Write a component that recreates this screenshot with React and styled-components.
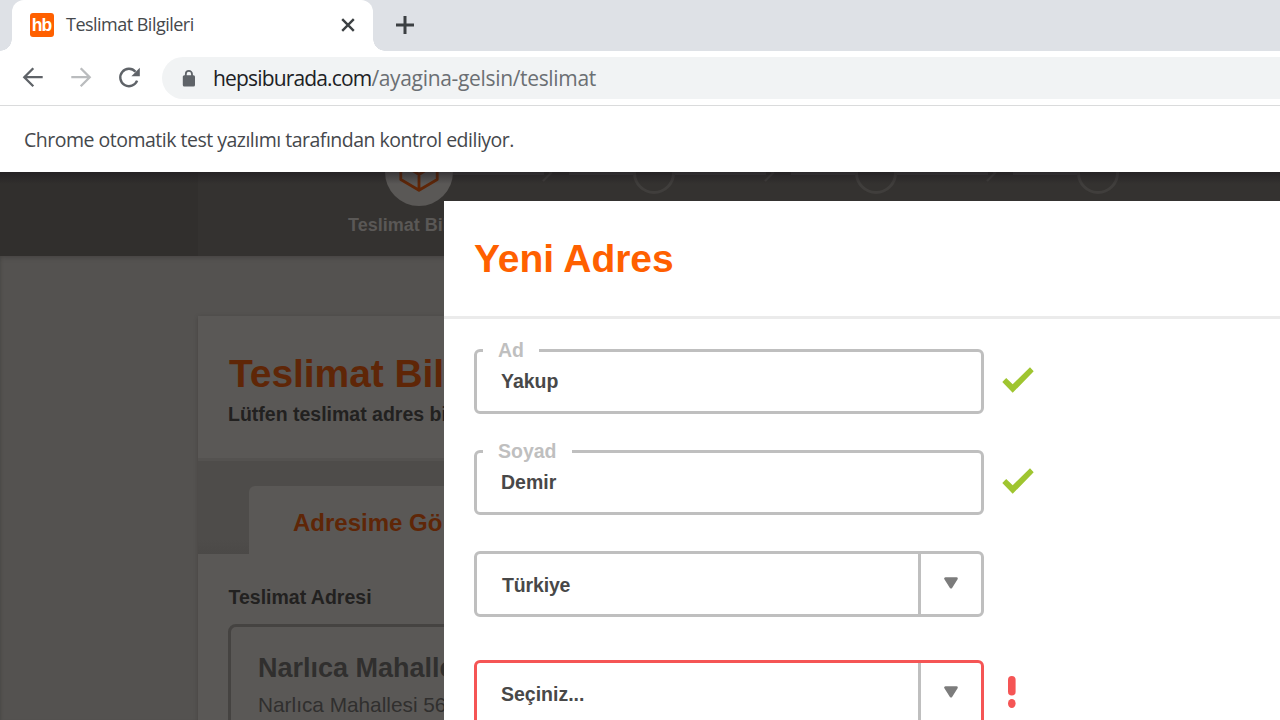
import React from "react";
import styled, { createGlobalStyle } from "styled-components";

const GlobalStyle = createGlobalStyle`
  * { box-sizing: border-box; }
  body { margin: 0; background: #545250; font-family: "Liberation Sans", Arial, sans-serif; }
`;

const Window = styled.div`
  width: 1280px;
  height: 720px;
  overflow: hidden;
  display: flex;
  flex-direction: column;
`;

/* Browser chrome */
const TabStrip = styled.div`
  height: 51px;
  flex: none;
  background: #dee1e6;
  display: flex;
  padding-left: 12px;
  font-family: "Open Sans", "Noto Sans", sans-serif;
`;

const Tab = styled.div`
  position: relative;
  width: 361px;
  height: 51px;
  background: #fff;
  border-radius: 12px 12px 0 0;
  display: flex;
  align-items: center;
  padding: 0 18px 1px;
  &::before, &::after {
    content: "";
    position: absolute;
    bottom: 0;
    width: 12px;
    height: 12px;
  }
  &::before { left: -12px; background: radial-gradient(circle at 0 0, transparent 11.5px, #fff 12px); }
  &::after { right: -12px; background: radial-gradient(circle at 100% 0, transparent 11.5px, #fff 12px); }
`;

const Favicon = styled.div`
  width: 24px;
  height: 24px;
  border-radius: 3px;
  background: #ff6000;
  color: #fff;
  font: bold 17.5px/25px "Liberation Sans", Arial, sans-serif;
  letter-spacing: -1px;
  text-indent: -1px;
  text-align: center;
`;

const TabTitle = styled.span`
  flex: 1;
  margin-left: 12px;
  margin-top: -2px;
  font-size: 18px;
  line-height: 24px;
  letter-spacing: -0.52px;
  color: #45484c;
  white-space: nowrap;
`;

const NewTab = styled.div`
  display: flex;
  align-items: center;
  margin-left: 22px;
  padding-bottom: 1px;
`;

const Toolbar = styled.div`
  height: 55px;
  flex: none;
  background: #fff;
  border-bottom: 1px solid #dadbdc;
  display: flex;
  align-items: center;
  padding-left: 21px;
`;

const NavIcon = styled.svg`
  display: block;
  width: 24px;
  height: 24px;
  margin-right: 24px;
`;

const Omnibox = styled.div`
  flex: 1;
  height: 42px;
  margin-left: -3px;
  border-radius: 21px 0 0 21px;
  background: #f1f3f4;
  display: flex;
  align-items: center;
  padding-left: 20px;
`;

const Url = styled.span`
  margin-left: 17px;
  font: 21px/30px "Open Sans", "Noto Sans", sans-serif;
  letter-spacing: -0.33px;
  color: #6b6f73;
  white-space: nowrap;
`;

const Host = styled.span`
  letter-spacing: -0.84px;
  color: #202124;
`;

const InfoBar = styled.div`
  height: 66px;
  flex: none;
  background: #fff;
  display: flex;
  align-items: center;
  padding: 2px 24px 0;
  font: 19.5px/28px "Open Sans", "Noto Sans", sans-serif;
  letter-spacing: -0.5px;
  color: #45484c;
  white-space: nowrap;
`;

/* Dimmed page */
const Page = styled.main`
  position: relative;
  flex: 1;
  overflow: hidden;
  background: #545250;
  box-shadow: inset 3px 0 3px -2px #4a4846;
`;

const TopShade = styled.div`
  position: absolute;
  inset: 0 0 auto 0;
  height: 12px;
  background: linear-gradient(rgba(24, 20, 26, 0.5), rgba(24, 20, 26, 0));
`;

const StepBar = styled.header`
  height: 84px;
  padding-left: 198px;
  background: #312f2d;
  box-shadow: 0 1px 5px rgba(30, 28, 26, 0.3);
`;

const StepArea = styled.div`
  height: 84px;
  overflow: hidden;
  background: #343230;
  padding-left: 187px;
`;

const StepTrack = styled.div`
  display: flex;
  align-items: center;
  height: 70px;
  margin-top: -34px;
`;

const ActiveStep = styled.div`
  width: 68px;
  height: 68px;
  margin-top: -2px;
  flex: none;
  border-radius: 50%;
  background: #5a5856;
  display: flex;
  align-items: center;
  justify-content: center;
`;

const Step = styled.div`
  width: 42px;
  height: 42px;
  flex: none;
  border: 3px solid #403e3c;
  border-radius: 50%;
`;

const Line = styled.div`
  height: 3px;
  flex: none;
  width: ${(p) => p.$w}px;
  margin-left: ${(p) => p.$gap || 0}px;
  margin-top: 1px;
  background: #403e3e;
`;

const ArrowHead = styled.svg`
  flex: none;
  display: block;
  width: 12px;
  height: 18px;
  margin-left: -3px;
`;

const StepLabel = styled.div`
  margin: 6px 0 0 -37px;
  font-size: 18px;
  font-weight: bold;
  line-height: 22px;
  color: #5a5856;
  white-space: nowrap;
`;

const Panel = styled.section`
  width: 960px;
  height: 500px;
  margin: 60px 0 0 198px;
  background: #5a5856;
  box-shadow: 0 1px 4px rgba(30, 28, 26, 0.25);
  white-space: nowrap;
`;

const PanelHead = styled.div`
  height: 145px;
  padding: 35px 0 0 30px;
  border-bottom: 3px solid #545250;
`;

const PanelTitle = styled.h1`
  margin: 0 0 0 1px;
  font-size: 39px;
  line-height: 46px;
  letter-spacing: -0.08px;
  color: #5f2607;
`;

const PanelSub = styled.p`
  margin: 5px 0 0;
  font-size: 19.5px;
  font-weight: bold;
  line-height: 24px;
  color: #222120;
`;

const TabRow = styled.div`
  height: 93px;
  padding: 25px 0 0 51px;
  background: linear-gradient(#4e4c4a 85%, #4b4947);
`;

const DeliveryTab = styled.div`
  height: 68px;
  padding-left: 44px;
  border-radius: 6px 6px 0 0;
  background: #5a5856;
  font-size: 24px;
  font-weight: bold;
  line-height: 73px;
  color: #5f2607;
`;

const PanelBody = styled.div`
  padding: 31px 30px 0;
`;

const SectionLabel = styled.div`
  margin-left: 0.5px;
  font-size: 19.5px;
  font-weight: bold;
  line-height: 24px;
  color: #222120;
`;

const AddressCard = styled.div`
  height: 180px;
  margin-top: 15px;
  padding: 25px 27px;
  border: 3px solid #454341;
  border-radius: 8px;
  color: #302f2e;
`;

const AddressName = styled.div`
  font-size: 27px;
  font-weight: bold;
  line-height: 32px;
`;

const AddressLine = styled.div`
  margin-top: 9px;
  font-size: 20.8px;
  line-height: 24px;
`;

/* Modal dialog laid over the page */
const Modal = styled.div`
  position: absolute;
  top: 29px;
  left: 444px;
  width: 836px;
  height: 519px;
  background: #fff;
`;

const ModalHead = styled.div`
  height: 118px;
  padding: 35px 0 0 30px;
  border-bottom: 3px solid #ebebeb;
`;

const ModalTitle = styled.h2`
  margin: 0;
  font-size: 39px;
  line-height: 46px;
  letter-spacing: -0.05px;
  color: #ff6000;
`;

const Form = styled.form`
  padding: 30px 0 0 30px;
  display: flex;
  flex-direction: column;
`;

const FieldRow = styled.div`
  display: flex;
  align-items: center;
  margin-bottom: ${(p) => p.$gap}px;
`;

const TextField = styled.div`
  position: relative;
  width: 510px;
  height: 65px;
  padding: 17px 24px 0;
  border: 3px solid #bfbfbf;
  border-radius: 6px;
  font-size: 19.5px;
  font-weight: bold;
  line-height: 24px;
  color: #484848;
`;

const FieldValue = styled.span`
  display: block;
`;

const FieldLabel = styled.label`
  position: absolute;
  top: -12px;
  left: 6px;
  padding: 0 15px;
  line-height: 20px;
  background: #fff;
  color: #bfbfbf;
`;

const SelectField = styled.div`
  width: 510px;
  height: 66px;
  border: 3px solid ${(p) => (p.$error ? "#f55555" : "#bfbfbf")};
  border-radius: 6px;
  display: flex;
  font-size: 19.5px;
  font-weight: bold;
  line-height: 62px;
  letter-spacing: ${(p) => (p.$error ? 0 : -0.15)}px;
  color: #484848;
`;

const SelectValue = styled.span`
  flex: 1;
  padding-left: ${(p) => p.$pad}px;
`;

const Caret = styled.span`
  width: 63px;
  height: 60px;
  padding-left: 23px;
  padding-top: 23px;
  border-left: 3px solid #bfbfbf;
`;

const Mark = styled.svg`
  display: block;
  flex: none;
  margin-left: ${(p) => p.$left}px;
  margin-top: ${(p) => p.$top || 0}px;
`;

const CaretSvg = styled.svg`
  display: block;
`;

const CheckMark = () => (
  <Mark $left={18} $top={-3} width="32" height="26" viewBox="0 0 32 26">
    <path d="M0.3 15 4.2 11 10.7 17.3 28 0.2 31.7 4.3 10.7 25.8Z" fill="#9fc530" />
  </Mark>
);

const ErrorMark = () => (
  <Mark $left={24} $top={-2} width="8" height="33" viewBox="0 0 8 33">
    <rect x="0" y="0" width="7.6" height="19.5" rx="3.8" fill="#f55555" />
    <ellipse cx="3.8" cy="27.5" rx="3.8" ry="4.5" fill="#f55555" />
  </Mark>
);

const CaretIcon = () => (
  <CaretSvg width="14" height="13" viewBox="0 0 14 13">
    <path d="M1.5 1.5H12.5L7 10.2Z" fill="#7c7c7c" stroke="#7c7c7c" strokeWidth="2.6" strokeLinejoin="round" />
  </CaretSvg>
);

const Input = ({ label, value }) => (
  <FieldRow $gap={36}>
    <TextField>
      <FieldLabel>{label}</FieldLabel>
      <FieldValue>{value}</FieldValue>
    </TextField>
    <CheckMark />
  </FieldRow>
);

const Select = ({ value, error, pad }) => (
  <FieldRow $gap={43}>
    <SelectField $error={error}>
      <SelectValue $pad={pad}>{value}</SelectValue>
      <Caret><CaretIcon /></Caret>
    </SelectField>
    {error && <ErrorMark />}
  </FieldRow>
);

const NextStep = () => (
  <>
    <Line $w={91} />
    <ArrowHead viewBox="0 0 12 18">
      <path d="M2 1 10 9 2 17" fill="none" stroke="#403e3c" strokeWidth="2.4" />
    </ArrowHead>
    <Line $w={64} $gap={16} />
    <Step />
  </>
);

export default function App() {
  return (
    <Window>
      <GlobalStyle />
      <TabStrip>
        <Tab>
          <Favicon>hb</Favicon>
          <TabTitle>Teslimat Bilgileri</TabTitle>
          <svg width="14" height="14" viewBox="0 0 14 14">
            <path d="M1.2 1.2 12.8 12.8M12.8 1.2 1.2 12.8" stroke="#3c4043" strokeWidth="2.4" />
          </svg>
        </Tab>
        <NewTab>
          <svg width="20" height="20" viewBox="0 0 20 20">
            <path d="M10 1V19M1 10H19" stroke="#3c4043" strokeWidth="3" />
          </svg>
        </NewTab>
      </TabStrip>
      <Toolbar>
        <NavIcon viewBox="0 0 24 24">
          <path d="M21.7 11.2H3.5M12.3 2.2 3.3 11.2 12.3 20.2" fill="none" stroke="#5f6368" strokeWidth="2.3" />
        </NavIcon>
        <NavIcon viewBox="0 0 24 24">
          <path d="M2.3 11.2H20.5M11.7 2.2 20.7 11.2 11.7 20.2" fill="none" stroke="#babcbe" strokeWidth="2.3" />
        </NavIcon>
        <NavIcon viewBox="0 0 24 24">
          <path d="M18.5 5.7A8.7 8.7 0 1 0 20.1 14.6" fill="none" stroke="#5f6368" strokeWidth="2.4" />
          <path d="M22.8 1.8V10.2H14.4Z" fill="#5f6368" />
        </NavIcon>
        <Omnibox>
          <svg width="14" height="18" viewBox="0 0 14 18">
            <path d="M3.8 8V5a3.1 3.1 0 0 1 6.2 0V8" fill="none" stroke="#5f6368" strokeWidth="1.8" />
            <rect x="0.8" y="6.3" width="12.2" height="11.2" rx="1.5" fill="#5f6368" />
          </svg>
          <Url><Host>hepsiburada.com</Host>/ayagina-gelsin/teslimat</Url>
        </Omnibox>
      </Toolbar>
      <InfoBar>Chrome otomatik test yazılımı tarafından kontrol ediliyor.</InfoBar>
      <Page>
        <StepBar>
          <StepArea>
            <StepTrack>
              <ActiveStep>
                <svg width="42" height="42" viewBox="0 0 42 42">
                  <path d="M21 2 39.2 11V28.5L21 39.3 2.8 28.5V11ZM2.8 12 21 23.5 39.2 12M21 23.5V39" fill="none" stroke="#5f2607" strokeWidth="2.8" strokeLinejoin="round" />
                </svg>
              </ActiveStep>
              <NextStep />
              <NextStep />
              <NextStep />
            </StepTrack>
            <StepLabel>Teslimat Bil</StepLabel>
          </StepArea>
        </StepBar>
        <Panel>
          <PanelHead>
            <PanelTitle>Teslimat Bil</PanelTitle>
            <PanelSub>Lütfen teslimat adres bi</PanelSub>
          </PanelHead>
          <TabRow>
            <DeliveryTab>Adresime Gö</DeliveryTab>
          </TabRow>
          <PanelBody>
            <SectionLabel>Teslimat Adresi</SectionLabel>
            <AddressCard>
              <AddressName>Narlıca Mahalle</AddressName>
              <AddressLine>Narlıca Mahallesi 56</AddressLine>
            </AddressCard>
          </PanelBody>
        </Panel>
        <TopShade />
        <Modal>
          <ModalHead>
            <ModalTitle>Yeni Adres</ModalTitle>
          </ModalHead>
          <Form>
            <Input label="Ad" value="Yakup" />
            <Input label="Soyad" value="Demir" />
            <Select value="Türkiye" pad={25} />
            <Select value="Seçiniz..." pad={24} error />
          </Form>
        </Modal>
      </Page>
    </Window>
  );
}
